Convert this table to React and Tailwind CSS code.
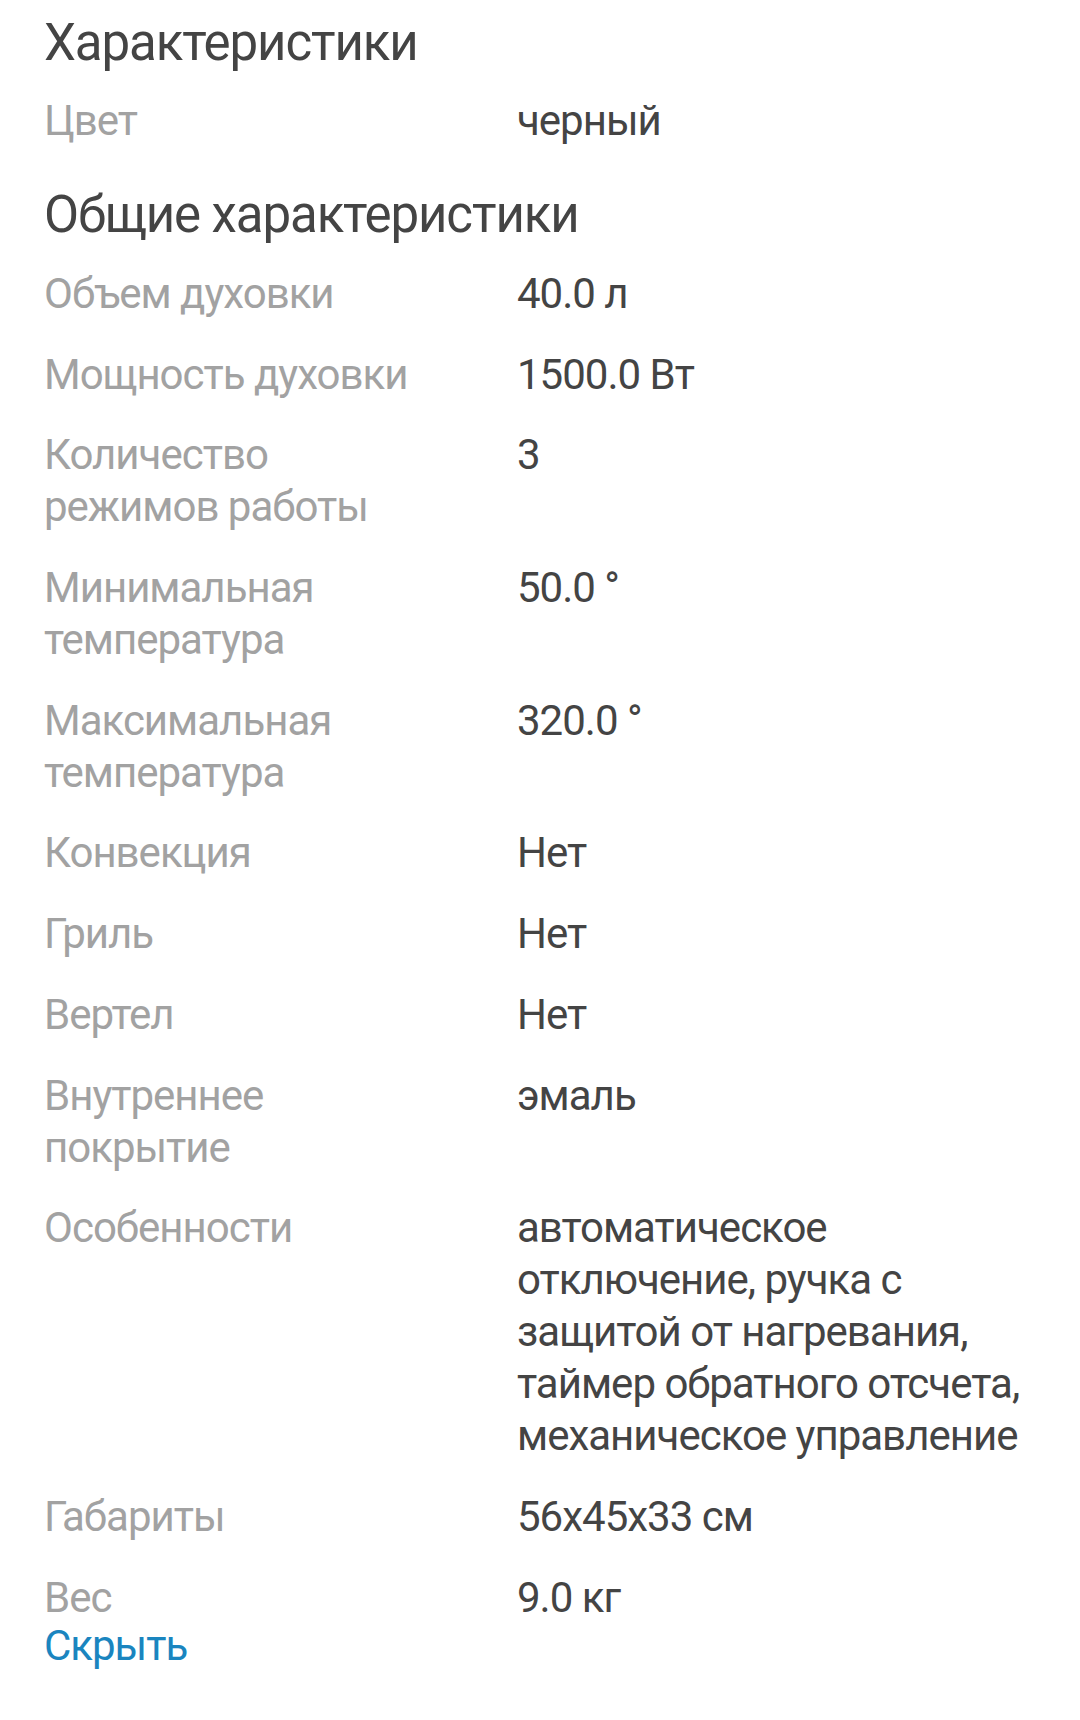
const specs = [
  { label: "Объем духовки", value: "40.0 л" },
  { label: "Мощность духовки", value: "1500.0 Вт" },
  { label: "Количество режимов работы", value: "3" },
  { label: "Минимальная температура", value: "50.0 °" },
  { label: "Максимальная температура", value: "320.0 °" },
  { label: "Конвекция", value: "Нет" },
  { label: "Гриль", value: "Нет" },
  { label: "Вертел", value: "Нет" },
  { label: "Внутреннее покрытие", value: "эмаль" },
  {
    label: "Особенности",
    value:
      "автоматическое отключение, ручка с защитой от нагревания, таймер обратного отсчета, механическое управление",
  },
  { label: "Габариты", value: "56x45x33 см" },
  { label: "Вес", value: "9.0 кг" },
];

const SpecRow = ({ label, value }) => (
  <div className="flex">
    <div className="w-[473px] shrink-0 pr-[85px] text-[#a2a2a2]">{label}</div>
    <div className="flex-1 text-[#444444]">{value}</div>
  </div>
);

export default function App() {
  return (
    <div className="min-h-[1720px] w-[1080px] bg-white pl-[44px] pr-[36px] pt-[13px] font-['Roboto',sans-serif] text-[42px] leading-[52px] tracking-[-1px]">
      {/* Section: basic */}
      <h2 className="text-[51px] leading-[60px] font-normal tracking-[-1.1px] text-[#444444]">Характеристики</h2>
      <div className="mt-[22px]">
        <SpecRow label="Цвет" value="черный" />
      </div>

      {/* Section: general */}
      <h2 className="mt-[38px] text-[51px] leading-[60px] font-normal tracking-[-1.1px] text-[#444444]">
        Общие характеристики
      </h2>
      <div className="mt-[23px] flex flex-col gap-[28.7px]">
        {specs.map((s) => (
          <SpecRow key={s.label} label={s.label} value={s.value} />
        ))}
      </div>

      <button className="block leading-[44px] text-[#1a85bf]">Скрыть</button>
    </div>
  );
}
